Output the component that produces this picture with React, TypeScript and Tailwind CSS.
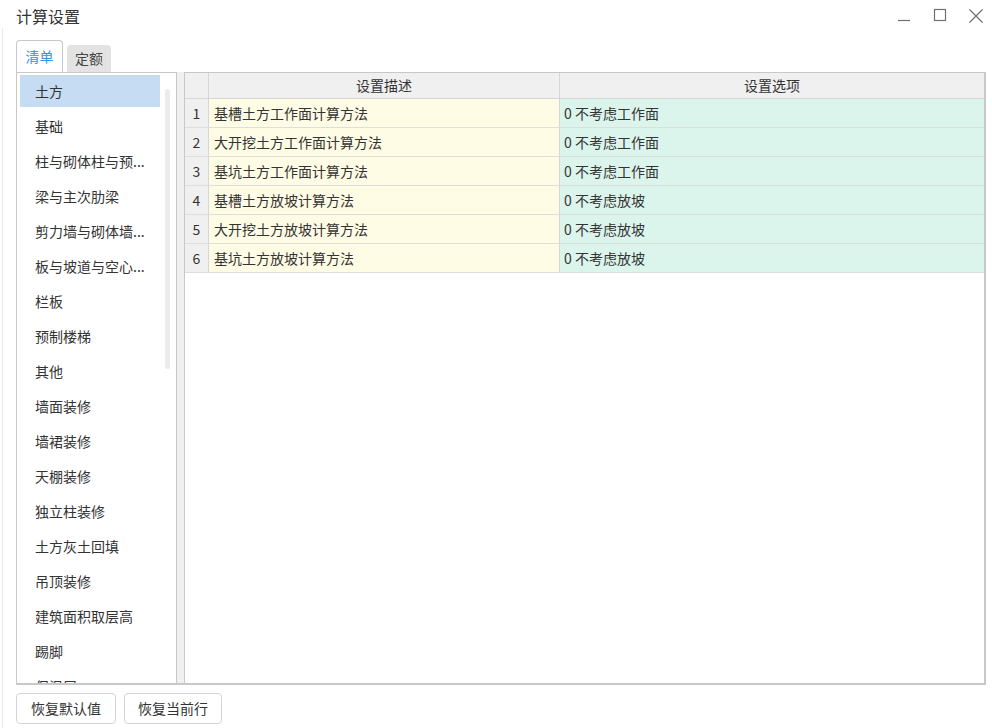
import React, { useState } from 'react';

const categories = [
  '土方',
  '基础',
  '柱与砌体柱与预...',
  '梁与主次肋梁',
  '剪力墙与砌体墙...',
  '板与坡道与空心...',
  '栏板',
  '预制楼梯',
  '其他',
  '墙面装修',
  '墙裙装修',
  '天棚装修',
  '独立柱装修',
  '土方灰土回填',
  '吊顶装修',
  '建筑面积取层高',
  '踢脚',
  '保温层',
];

const rows = [
  { desc: '基槽土方工作面计算方法', value: '0 不考虑工作面' },
  { desc: '大开挖土方工作面计算方法', value: '0 不考虑工作面' },
  { desc: '基坑土方工作面计算方法', value: '0 不考虑工作面' },
  { desc: '基槽土方放坡计算方法', value: '0 不考虑放坡' },
  { desc: '大开挖土方放坡计算方法', value: '0 不考虑放坡' },
  { desc: '基坑土方放坡计算方法', value: '0 不考虑放坡' },
];

const CalcSettings: React.FC = () => {
  const [tab, setTab] = useState<'list' | 'quota'>('list');
  const [selected, setSelected] = useState(0);

  return (
    <div
      className="relative w-[992px] h-[728px] overflow-hidden bg-white text-[#333]"
      style={{ fontFamily: '"Noto Sans CJK SC", "Noto Sans", sans-serif' }}
    >
      {/* faint window edge */}
      <div className="absolute left-[2px] top-[28px] bottom-0 w-px bg-[#e8e8e8]" />

      {/* title bar */}
      <div className="flex h-[32px] items-center pl-[16px] pr-[8px]">
        <span className="text-[16px] leading-none text-[#333]">计算设置</span>
        <div className="ml-auto flex items-center gap-[20px] text-[#707070]">
          <svg width="16" height="16" viewBox="0 0 16 16">
            <path d="M2 12.5h12" stroke="currentColor" strokeWidth="1.2" />
          </svg>
          <svg width="16" height="16" viewBox="0 0 16 16">
            <rect x="2.5" y="1.5" width="11" height="11" fill="none" stroke="currentColor" strokeWidth="1.2" />
          </svg>
          <svg width="16" height="16" viewBox="0 0 16 16">
            <path d="M1.5 1.5l13 13M14.5 1.5l-13 13" stroke="currentColor" strokeWidth="1.2" />
          </svg>
        </div>
      </div>

      {/* tabs */}
      <div className="mt-[9px] flex items-end gap-[4px] pl-[16px] h-[31px]">
        <button
          onClick={() => setTab('list')}
          className={
            tab === 'list'
              ? 'relative z-10 h-[32px] w-[47px] rounded-t-[4px] border border-b-0 border-[#c8c8c8] bg-white text-[14px] text-[#3a8ee6]'
              : 'h-[27px] w-[47px] rounded-t-[4px] bg-[#e3e3e3] text-[14px] text-[#444]'
          }
        >
          清单
        </button>
        <button
          onClick={() => setTab('quota')}
          className={
            tab === 'quota'
              ? 'relative z-10 h-[32px] w-[44px] rounded-t-[4px] border border-b-0 border-[#c8c8c8] bg-white text-[14px] text-[#3a8ee6]'
              : 'h-[27px] w-[44px] rounded-t-[4px] bg-[#e3e3e3] text-[14px] text-[#444]'
          }
        >
          定额
        </button>
      </div>

      {/* main panel */}
      <div className="ml-[16px] flex h-[613px] w-[970px] border-b-2 border-[#c8c8c8]">
        {/* category list */}
        <div className="relative h-full w-[161px] overflow-hidden border border-b-0 border-[#c8c8c8] bg-white pl-[3px] pt-[2px]">
          {categories.map((c, i) => (
            <div
              key={c}
              onClick={() => setSelected(i)}
              className={
                'mb-[3px] flex h-[32px] w-[140px] cursor-default items-center pl-[15px] text-[14px] whitespace-nowrap ' +
                (selected === i ? 'bg-[#c5dcf2]' : '')
              }
            >
              {c}
            </div>
          ))}
          <div className="absolute left-[148px] top-[16px] h-[280px] w-[5px] rounded-full bg-[#ebebeb]" />
        </div>

        {/* splitter */}
        <div className="h-full w-[7px] bg-[#f0f0f0]" />

        {/* grid */}
        <div className="h-full flex-1 border border-r-2 border-b-0 border-[#c8c8c8] bg-white">
          <div className="flex h-[26px] border-b border-[#d6d6d6] bg-[#f0f0f0] text-[14px]">
            <div className="w-[24px] border-r border-[#d6d6d6]" />
            <div className="flex w-[351px] items-center justify-center border-r border-[#d6d6d6]">设置描述</div>
            <div className="flex flex-1 items-center justify-center">设置选项</div>
          </div>
          {rows.map((r, i) => (
            <div key={i} className="flex h-[29px] border-b border-[#dedede] text-[14px]">
              <div className="flex w-[24px] items-center justify-center border-r border-[#d6d6d6] bg-[#f0f0f0]">{i + 1}</div>
              <div className="flex w-[351px] items-center border-r border-[#d6d6d6] bg-[#fffce6] pl-[5px]">{r.desc}</div>
              <div className="flex flex-1 items-center bg-[#dcf5ec] pl-[4px]">{r.value}</div>
            </div>
          ))}
        </div>
      </div>

      {/* footer buttons */}
      <div className="mt-[8px] flex gap-[8px] pl-[16px]">
        <button className="h-[31px] w-[100px] rounded-[4px] border border-[#d4d4d4] bg-white text-[14px] text-[#333]">
          恢复默认值
        </button>
        <button className="h-[31px] w-[98px] rounded-[4px] border border-[#d4d4d4] bg-white text-[14px] text-[#333]">
          恢复当前行
        </button>
      </div>
    </div>
  );
};

export default function App() {
  return <CalcSettings />;
}
